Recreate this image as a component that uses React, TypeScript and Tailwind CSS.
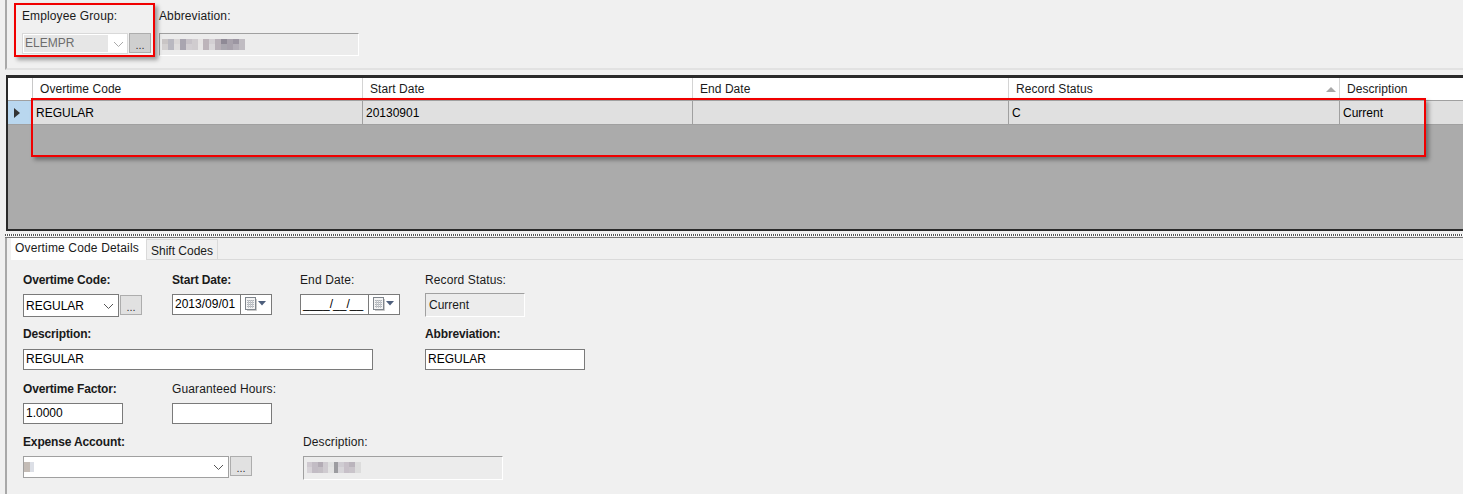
import React from 'react';

const FONT = "font-['Liberation_Sans',Arial,sans-serif]";

const Chevron = ({ color = '#555' }: { color?: string }) => (
  <svg width="11" height="6" viewBox="0 0 11 6" fill="none">
    <path d="M1 1l4.5 4.5L10 1" stroke={color} strokeWidth="1" />
  </svg>
);

const CalendarIcon = () => (
  <svg width="26" height="17" viewBox="0 0 26 17">
    <rect x="1.500" y="1.500" width="10" height="12" fill="#f4f4f4" stroke="#7f858c" />
    <path d="M3 4.500h7M3 6.500h7M3 8.500h7M3 10.500h7" stroke="#aeb3b9" strokeWidth="1" />
    <path d="M4.500 4v8M6.500 4v8M8.500 4v8" stroke="#c3c6ca" strokeWidth="1" />
    <path d="M12.500 3v11.500H3" stroke="#c9c9c9" fill="none" />
    <path d="M14 5h8l-4 4.500z" fill="#4e5f7c" />
  </svg>
);

// blurred-out values from the original screenshot
const Smudge = ({ cells }: { cells: [number, number, string][] }) => (
  <svg width="90" height="14" viewBox="0 0 90 14" shapeRendering="crispEdges">
    {cells.map(([x, w, c], i) => (
      <rect key={i} x={x} y={1} width={w} height={5} fill={c} />
    ))}
    {cells.map(([x, w, c], i) => (
      <rect key={i} x={x} y={6} width={w} height={6} fill={c} opacity={i % 2 ? 1 : 0.7} />
    ))}
  </svg>
);

const DotsButton = ({ disabled }: { disabled?: boolean }) => (
  <div className={`w-[22px] h-[20px] border border-[#adadad] flex items-end justify-center pb-[1px] text-[11px] leading-[12px] text-[#333] ${disabled ? 'bg-[#cfcfcf]' : 'bg-[#e1e1e1]'}`}>
    ...
  </div>
);

const Label = ({ children, bold }: { children: React.ReactNode; bold?: boolean }) => (
  <div className={`text-[12px] leading-[14px] text-[#1a1a1a] whitespace-nowrap ${bold ? 'font-bold tracking-[-0.15px]' : 'tracking-[0.12px]'}`}>{children}</div>
);

const TextBox = ({ value, w }: { value?: string; w: string }) => (
  <div className={`${w} h-[21px] bg-white border border-[#7a7a7a] px-[2px] text-[12px] leading-[19px] text-black`}>{value}</div>
);

const DateBox = ({ value }: { value: string }) => (
  <div className="w-[100px] h-[21px] bg-white border border-[#7a7a7a] flex text-[12px] leading-[19px] text-black">
    <div className="w-[68px] border-r border-[#7a7a7a] px-[2px] whitespace-nowrap overflow-hidden">{value}</div>
    <div className="flex-1 flex items-center pl-[3px]"><CalendarIcon /></div>
  </div>
);

const ReadOnlyBox = ({ w, h, children }: { w: string; h: string; children?: React.ReactNode }) => (
  <div className={`${w} ${h} border-t border-l border-t-[#a0a0a0] border-l-[#a0a0a0] border-r border-b border-r-white border-b-white bg-[#ececec] flex items-center text-[12px] text-[#1a1a1a]`}>
    {children}
  </div>
);

const columns = [
  { title: 'Overtime Code', w: 'w-[330px]', value: 'REGULAR' },
  { title: 'Start Date', w: 'w-[330px]', value: '20130901' },
  { title: 'End Date', w: 'w-[316px]', value: '' },
  { title: 'Record Status', w: 'w-[331px]', value: 'C', sorted: true },
  { title: 'Description', w: 'flex-1', value: 'Current', last: true },
];

const RedBox = ({ className }: { className: string }) => (
  <div className={`absolute border-2 border-[#f00000] shadow-[3px_3px_4px_rgba(0,0,0,0.35)] ${className}`} />
);

export default function App() {
  return (
    <div className={`${FONT} relative w-[1463px] h-[494px] overflow-hidden bg-[#f0f0f0]`}>
      {/* header panel */}
      <div className="h-[75px] pl-[5px]">
        <div className="h-[70px] border-l-2 border-b-2 border-l-[#a8a8a8] border-b-[#e2e2e2] pl-[15px] pt-[9px] flex">
          <div className="w-[137px]">
            <Label>Employee Group:</Label>
            <div className="flex gap-[1px] mt-[10px]">
              <div className="w-[106px] h-[21px] bg-white border border-[#d9d9d9] flex items-center justify-between pl-[1px] pr-[3px]">
                <div className="w-[84px] h-[17px] bg-[#e6e6e6] text-[12px] leading-[16px] text-[#6d6d6d] pl-[1px]">ELEMPR</div>
                <Chevron color="#aaa" />
              </div>
              <DotsButton disabled />
            </div>
          </div>
          <div>
            <Label>Abbreviation:</Label>
            <div className="mt-[10px]">
              <ReadOnlyBox w="w-[200px]" h="h-[23px]">
                <Smudge cells={[[2, 6, '#c9c5c5'], [8, 6, '#b9b8c0'], [14, 6, '#dad7d7'], [20, 6, '#a9a5b0'], [26, 6, '#c7c2c8'], [32, 6, '#d0cccf'], [38, 5, '#e6e3e3'], [43, 6, '#bdb4ba'], [49, 6, '#d3cfd3'], [55, 6, '#b8b0b8'], [61, 6, '#8f8a96'], [67, 6, '#a8a2ac'], [73, 6, '#9c96a2'], [79, 6, '#c0bcc2']]} />
              </ReadOnlyBox>
            </div>
          </div>
        </div>
      </div>

      {/* grid */}
      <div className="h-[156px] ml-[6px] border-t-[3px] border-l-2 border-b-2 border-[#2a2a2a] bg-[#ababab] flex flex-col">
        <div className="h-[23px] bg-white border-b border-[#a0a0a0] flex text-[12px] text-[#1a1a1a] tracking-[0.05px]">
          <div className="w-[25px] shrink-0 border-r border-[#c8c8c8]" />
          {columns.map(c => (
            <div key={c.title} className={`${c.w} relative pl-[7px] leading-[22px] whitespace-nowrap ${c.last ? '' : 'border-r border-[#d4d4d4]'}`}>
              {c.title}
              {c.sorted && <div className="absolute right-[3px] top-[9px] w-0 h-0 border-x-[5px] border-b-[5px] border-x-transparent border-b-[#a8a8a8]" />}
            </div>
          ))}
        </div>
        <div className="h-[24px] bg-[#e0e0e0] border-b border-[#a0a0a0] flex text-[12px] text-black">
          <div className="w-[25px] shrink-0 bg-[#b9d7ef] border-r border-[#a0a0a0] flex items-center pl-[6px]">
            <div className="w-0 h-0 border-y-[5px] border-l-[6px] border-y-transparent border-l-[#333]" />
          </div>
          {columns.map(c => (
            <div key={c.title} className={`${c.w} pl-[3px] leading-[25px] whitespace-nowrap ${c.last ? '' : 'border-r border-[#a0a0a0]'}`}>{c.value}</div>
          ))}
        </div>
      </div>

      {/* splitter */}
      <div className="h-[6px] ml-[5px] mt-[1px] border-b border-[#777] bg-[repeating-linear-gradient(90deg,#555_0,#555_1px,#fff_1px,#fff_2px)] bg-[length:100%_2px] bg-no-repeat bg-[position:0_2px]" />

      {/* details */}
      <div className="h-[258px] ml-[5px] border-l-2 border-[#a8a8a8] pl-[4px]">
        <div className="h-[22px] flex items-end border-b border-[#dadada]">
          <div className="w-[135px] h-[22px] bg-white -mb-[1px] text-[12px] leading-[21px] tracking-[0.15px] text-[#1a1a1a] pl-[4px] whitespace-nowrap">Overtime Code Details</div>
          <div className="w-[72px] h-[20px] bg-[#f0f0f0] border border-b-0 border-[#dadada] text-[12px] leading-[22px] text-[#1a1a1a] pl-[4px] whitespace-nowrap">Shift Codes</div>
        </div>

        <div className="pl-[12px] pt-[13px]">
          {/* row 1 */}
          <div className="flex">
            <div className="w-[149px]">
              <Label bold>Overtime Code:</Label>
              <div className="flex gap-[1px] mt-[7px]">
                <div className="w-[96px] h-[23px] bg-white border border-[#7a7a7a] flex items-center justify-between pl-[2px] pr-[4px] text-[12px] text-black">
                  REGULAR<Chevron />
                </div>
                <div className="mt-[1px]"><DotsButton /></div>
              </div>
            </div>
            <div className="w-[128px]">
              <Label bold>Start Date:</Label>
              <div className="mt-[7px]"><DateBox value="2013/09/01" /></div>
            </div>
            <div className="w-[125px]">
              <Label>End Date:</Label>
              <div className="mt-[7px]"><DateBox value="____/__/__" /></div>
            </div>
            <div>
              <Label>Record Status:</Label>
              <div className="mt-[6px]">
                <ReadOnlyBox w="w-[100px]" h="h-[24px]"><span className="pl-[3px]">Current</span></ReadOnlyBox>
              </div>
            </div>
          </div>

          {/* row 2 */}
          <div className="flex mt-[10px]">
            <div className="w-[402px]">
              <Label bold>Description:</Label>
              <div className="mt-[8px]"><TextBox w="w-[350px]" value="REGULAR" /></div>
            </div>
            <div>
              <Label bold>Abbreviation:</Label>
              <div className="mt-[8px]"><TextBox w="w-[160px]" value="REGULAR" /></div>
            </div>
          </div>

          {/* row 3 */}
          <div className="flex mt-[12px]">
            <div className="w-[149px]">
              <Label bold>Overtime Factor:</Label>
              <div className="mt-[7px]"><TextBox w="w-[100px]" value="1.0000" /></div>
            </div>
            <div>
              <Label>Guaranteed Hours:</Label>
              <div className="mt-[7px]"><TextBox w="w-[100px]" /></div>
            </div>
          </div>

          {/* row 4 */}
          <div className="flex mt-[11px]">
            <div className="w-[280px]">
              <Label bold>Expense Account:</Label>
              <div className="flex gap-[1px] mt-[7px]">
                <div className="w-[206px] h-[22px] bg-white border border-[#a0a0a0] flex items-center justify-between pr-[4px]">
                  <div className="flex"><div className="w-[6px] h-[10px] bg-[#c4bcb6]" /><div className="w-[4px] h-[10px] bg-[#dcdfe6]" /></div>
                  <Chevron />
                </div>
                <DotsButton />
              </div>
            </div>
            <div>
              <Label>Description:</Label>
              <div className="mt-[7px]">
                <ReadOnlyBox w="w-[200px]" h="h-[24px]">
                  <Smudge cells={[[3, 5, '#cfc9d0'], [8, 6, '#c2bcc4'], [14, 5, '#b3acb5'], [19, 5, '#cfcbd0'], [24, 6, '#dfe0e0'], [30, 4, '#9c9ca0'], [34, 6, '#cfccd2'], [40, 5, '#c7c0c8'], [45, 6, '#bab4bc'], [51, 6, '#dcdcdc']]} />
                </ReadOnlyBox>
              </div>
            </div>
          </div>
        </div>
      </div>

      {/* annotations */}
      <RedBox className="left-[14px] top-[3px] w-[141px] h-[54px]" />
      <RedBox className="left-[31px] top-[98px] w-[1395px] h-[59px]" />
    </div>
  );
}
